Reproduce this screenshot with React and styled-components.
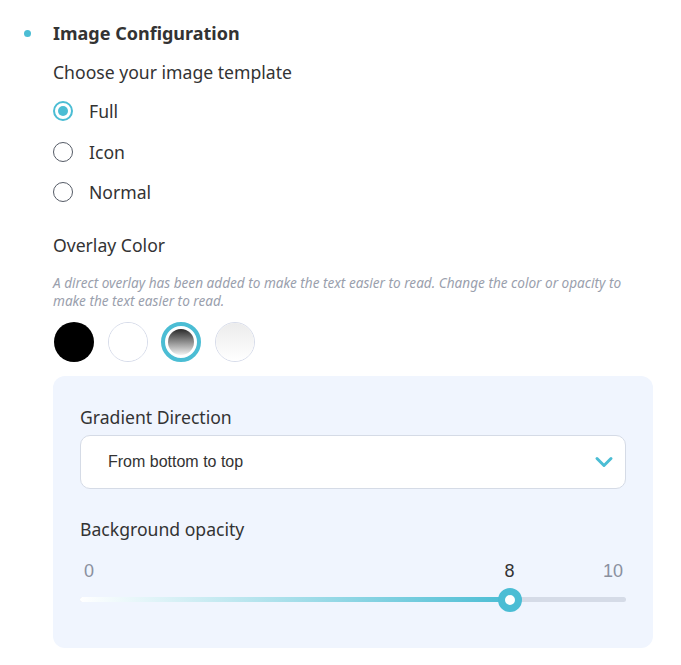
import styled, { createGlobalStyle } from "styled-components"

const Global = createGlobalStyle`
    body {
        margin: 0;
        background: #fff;
        font-family: "Noto Sans", "Open Sans", sans-serif;
        color: #333;
    }
`

const Page = styled.div`
    width: 681px;
    height: 665px;
    box-sizing: border-box;
    padding: 18px 28px 0 24px;
    display: flex;
    flex-direction: row;
    align-items: flex-start;
`
const Dot = styled.div`
    width: 7px;
    height: 7px;
    border-radius: 50%;
    background: #4bbdd4;
    margin-top: 12px;
    margin-right: 22px;
    flex-shrink: 0;
`
const Body = styled.div`
    flex: 1;
    display: flex;
    flex-direction: column;
`
const Heading = styled.div`
    font-size: 18px;
    font-weight: 700;
    line-height: 30px;
    color: #333;
`
const Label = styled.div`
    font-size: 17.6px;
    line-height: 24px;
    color: #333;
    margin-top: ${(p) => p.mt || 0}px;
`
const RadioList = styled.div`
    display: flex;
    flex-direction: column;
    gap: 16.5px;
    margin-top: 15px;
`
const RadioRow = styled.label`
    display: flex;
    align-items: center;
    gap: 16px;
    font-size: 17.6px;
    line-height: 24px;
    color: #333;
`
const RadioCircle = styled.span`
    width: 20px;
    height: 20px;
    box-sizing: border-box;
    border-radius: 50%;
    border: ${(p) => (p.checked ? "2px solid #4bbdd4" : "1.5px solid #555b66")};
    display: flex;
    align-items: center;
    justify-content: center;
    &::after {
        content: "";
        width: 10px;
        height: 10px;
        border-radius: 50%;
        background: ${(p) => (p.checked ? "#4bbdd4" : "transparent")};
    }
`
const Note = styled.p`
    margin: 17px 0 0;
    max-width: 580px;
    font-size: 13.6px;
    line-height: 18px;
    font-style: italic;
    color: #9aa0ad;
`
const Swatches = styled.div`
    display: flex;
    gap: 13.5px;
    margin-top: 12px;
    margin-left: 1px;
`
const Swatch = styled.div`
    width: 40px;
    height: 40px;
    box-sizing: border-box;
    border-radius: 50%;
    border: ${(p) => (p.active ? "4px solid #4bbdd4" : p.plain ? "none" : "1px solid #d7dcea")};
    padding: ${(p) => (p.active ? "3px" : "0")};
    background: #fff;
    &::after {
        content: "";
        display: block;
        width: 100%;
        height: 100%;
        border-radius: 50%;
        background: ${(p) => p.fill};
    }
`
const Panel = styled.div`
    margin-top: 14px;
    background: #f0f5fe;
    border-radius: 12px;
    padding: 29px 27px 0 27px;
    height: 272px;
    box-sizing: border-box;
    display: flex;
    flex-direction: column;
`
const Select = styled.div`
    margin-top: 6px;
    height: 54px;
    box-sizing: border-box;
    background: #fff;
    border: 1px solid #d5dbe6;
    border-radius: 10px;
    display: flex;
    align-items: center;
    justify-content: space-between;
    padding: 0 11px 0 27px;
    font-family: "Liberation Sans", Arial, sans-serif;
    font-size: 16px;
    color: #333;
`
const Scale = styled.div`
    position: relative;
    height: 22px;
    margin-top: 20px;
    font-family: "Liberation Sans", Arial, sans-serif;
    font-size: 18px;
`
const Tick = styled.span`
    position: absolute;
    top: 0;
    color: ${(p) => (p.dark ? "#333" : "#8a909e")};
    transform: translateX(-50%);
`
const Track = styled.div`
    position: relative;
    height: 5px;
    border-radius: 3px;
    margin-top: 14px;
    background: #d5dbe7;
`
const Fill = styled.div`
    height: 100%;
    border-radius: 3px;
    background: linear-gradient(to right, #ffffff, #4bbdd4);
`
const Thumb = styled.div`
    position: absolute;
    top: 50%;
    width: 24px;
    height: 24px;
    box-sizing: border-box;
    border-radius: 50%;
    border: 7px solid #4bbdd4;
    background: #fff;
    transform: translate(-50%, -50%);
`

const Chevron = () => (
    <svg width="20" height="20" viewBox="0 0 20 20" fill="none">
        <path d="M3 6.5 L10 13.5 L17 6.5" stroke="#4bbdd4" strokeWidth="3" strokeLinecap="round" strokeLinejoin="round" />
    </svg>
)

const App = () => {
    const templates = ["Full", "Icon", "Normal"]
    const value = 8
    const ratio = value / 10
    const thumbPos = `calc(${ratio} * (100% - 24px) + 12px)`

    return (
        <Page>
            <Global />
            <Dot />
            <Body>
                <Heading>Image Configuration</Heading>
                <Label mt={12}>Choose your image template</Label>
                <RadioList>
                    {templates.map((t, i) => (
                        <RadioRow key={t}>
                            <RadioCircle checked={i === 0} />
                            {t}
                        </RadioRow>
                    ))}
                </RadioList>
                <Label mt={29}>Overlay Color</Label>
                <Note>
                    A direct overlay has been added to make the text easier to read. Change the color or opacity to make the text easier to read.
                </Note>
                <Swatches>
                    <Swatch fill="#000" plain />
                    <Swatch fill="#fff" />
                    <Swatch active fill="linear-gradient(to bottom, #2a2a2a, #f2f2f2)" />
                    <Swatch fill="linear-gradient(to bottom, #ececec, #ffffff)" />
                </Swatches>
                <Panel>
                    <Label>Gradient Direction</Label>
                    <Select>
                        From bottom to top
                        <Chevron />
                    </Select>
                    <Label mt={28}>Background opacity</Label>
                    <Scale>
                        <Tick style={{ left: "9px" }}>0</Tick>
                        <Tick dark style={{ left: thumbPos }}>{value}</Tick>
                        <Tick style={{ left: "calc(100% - 13px)" }}>10</Tick>
                    </Scale>
                    <Track>
                        <Fill style={{ width: thumbPos }} />
                        <Thumb style={{ left: thumbPos }} />
                    </Track>
                </Panel>
            </Body>
        </Page>
    )
}
export default App
